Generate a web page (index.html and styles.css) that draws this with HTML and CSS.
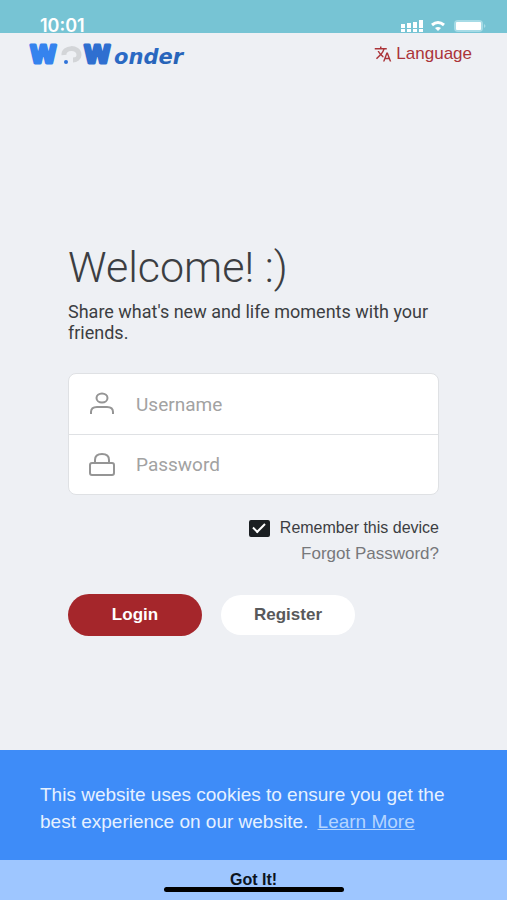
FILE: index.html
```html
<!DOCTYPE html>
<html lang="en">

<head>
  <meta charset="UTF-8" />
  <meta name="viewport" content="width=device-width, initial-scale=1">
  <title>WoWonder</title>
  <link rel="stylesheet" href="styles.css">
</head>

<body>
  <div class="status-bar">
    <span class="time">10:01</span>
    <svg class="status-icons" viewBox="0 0 88 16" aria-hidden="true">
      <g stroke="#fff" stroke-width="4">
        <path d="M4 7v4M10 6v5M16 5v6M22 3v8" />
        <path d="M4 12v3M10 12v3M16 12v3M22 12v3" />
      </g>
      <path d="M33 8q6-5 12 0" fill="none" stroke="#fff" stroke-width="3" />
      <path d="M36 11q3-2 6 0l-3 3z" fill="#fff" />
      <rect x="55" y="3" width="29" height="12" rx="4" fill="#a6dbe6" />
      <rect x="57" y="5" width="25" height="8" rx="1" fill="#fff" />
      <path d="M85 7q3 2 0 4z" fill="#a6dbe6" />
    </svg>
  </div>

  <header class="header">
    <a class="logo" href="#" aria-label="WoWonder">
      <svg viewBox="0 0 164 40">
        <defs>
          <linearGradient id="blue" x1="0" y1="0" x2="1" y2="1">
            <stop offset="0" stop-color="#2f6fd0" />
            <stop offset="1" stop-color="#245fae" />
          </linearGradient>
        </defs>
        <text class="logo-w" x="3" y="29" fill="#3583ee" stroke="#3583ee">W</text>
        <path d="M37 21C36 13 52 12 52 21C52 24 49 26 46 26" fill="none" stroke="#d3d5d8" stroke-width="5" />
        <circle cx="39" cy="28" r="2" fill="#2f73d8" />
        <text class="logo-w" x="57" y="29" fill="#2f6fd0" stroke="#2f6fd0">W</text>
        <text class="logo-name" x="87" y="30" fill="url(#blue)">onder</text>
      </svg>
    </a>
    <a class="language" href="#">
      <svg viewBox="0 0 24 24" aria-hidden="true">
        <path fill="currentColor" d="M12.87 15.07l-2.54-2.51.03-.03A17.52 17.52 0 0 0 14.07 6H17V4h-7V2H8v2H1v1.99h11.17C11.5 7.92 10.44 9.75 9 11.35 8.07 10.32 7.3 9.19 6.69 8h-2c.73 1.63 1.73 3.17 2.98 4.56l-5.09 5.02L4 19l5-5 3.11 3.11.76-2.04zM18.5 10h-2L12 22h2l1.12-3h4.75L21 22h2l-4.5-12zm-2.62 7l1.62-4.33L19.12 17h-3.24z" />
      </svg>
      Language
    </a>
  </header>

  <main class="main">
    <h1>Welcome! :)</h1>
    <p class="intro">Share what's new and life moments with your friends.</p>

    <form>
      <div class="fields">
        <div class="field">
          <label for="username" aria-label="Username">
            <svg viewBox="0 0 28 28">
              <ellipse cx="14" cy="8" rx="5.5" ry="4.5" />
              <path d="M3 24v-2q0-5 6-5h10q6 0 6 5v2" />
            </svg>
          </label>
          <input type="text" id="username" placeholder="Username">
        </div>
        <div class="field">
          <label for="password" aria-label="Password">
            <svg viewBox="0 0 28 28">
              <rect x="2" y="12" width="24" height="12" rx="2" />
              <path d="M7 12V9q0-6 7-6t7 6v3" />
            </svg>
          </label>
          <input type="password" id="password" placeholder="Password">
        </div>
      </div>

      <div class="options">
        <div class="remember">
          <input type="checkbox" id="remember" checked>
          <label for="remember">Remember this device</label>
        </div>
        <a class="forgot" href="#">Forgot Password?</a>
      </div>

      <div class="buttons">
        <button type="submit" class="btn btn-login">Login</button>
        <button type="button" class="btn btn-register">Register</button>
      </div>
    </form>
  </main>

  <div class="cookies">
    <p>This website uses cookies to ensure you get the best experience on our website. <a href="#">Learn More</a></p>
    <button type="button" class="got-it">Got It!</button>
    <div class="home-bar"></div>
  </div>
</body>

</html>
```

FILE: styles.css
```css
* {
  box-sizing: border-box;
}

body {
  margin: 0;
  min-height: 100vh;
  display: flex;
  flex-direction: column;
  background-color: #eef0f4;
  color: #3c3e42;
  font-family: Roboto, sans-serif;
}

.status-bar {
  display: flex;
  justify-content: space-between;
  align-items: flex-end;
  height: 33px;
  padding: 0 20px 0 40px;
  background-color: #77c4d4;
  color: #fff;
}

.time {
  font-family: Inter, sans-serif;
  font-size: 18px;
  font-weight: 600;
  line-height: 14px;
}

.status-icons {
  width: 88px;
  height: 16px;
}

.header {
  display: flex;
  justify-content: space-between;
  align-items: center;
  height: 42px;
  padding: 0 35px 0 27px;
}

.logo svg {
  display: block;
  width: 164px;
  height: 40px;
}

.logo-w {
  font-family: "DejaVu Sans", sans-serif;
  font-size: 24px;
  font-weight: bold;
  stroke-width: 3;
  stroke-linejoin: round;
}

.logo-name {
  font-family: "DejaVu Sans", sans-serif;
  font-size: 21px;
  font-style: italic;
  font-weight: bold;
}

.language {
  display: flex;
  align-items: center;
  gap: 4px;
  color: #ab3439;
  font-family: "Liberation Sans", sans-serif;
  font-size: 17px;
  text-decoration: none;
}

.language svg {
  width: 18px;
  height: 18px;
}

.main {
  flex: 1;
  padding: 168px 68px 48px;
}

h1 {
  margin: 0 0 10px;
  font-size: 43px;
  font-weight: 300;
  line-height: 48px;
}

.intro {
  margin: 0 0 30px;
  font-size: 18px;
  line-height: 21px;
}

.fields {
  overflow: hidden;
  background-color: #fff;
  border: 1px solid #dfe1e4;
  border-radius: 8px;
}

.field {
  display: flex;
  align-items: center;
  height: 60px;
  padding-left: 19px;
}

.field + .field {
  border-top: 1px solid #dfe1e4;
}

.field label,
.field svg {
  display: block;
  width: 28px;
  height: 28px;
}

.field svg {
  fill: none;
  stroke: #959595;
  stroke-width: 2;
}

.field input {
  flex: 1;
  min-width: 0;
  height: 100%;
  padding: 0 20px;
  border: 0;
  outline: 0;
  background: none;
  font-family: inherit;
  font-size: 19px;
}

.field input::placeholder {
  color: #a2a2a2;
}

.options {
  display: flex;
  flex-direction: column;
  align-items: flex-end;
  gap: 4px;
  margin: 22px 0 29px;
  font-family: "Liberation Sans", sans-serif;
  font-size: 16px;
  line-height: 22px;
}

.remember {
  display: flex;
  align-items: center;
  gap: 10px;
}

.remember input {
  appearance: none;
  display: grid;
  place-items: center;
  width: 21px;
  height: 17px;
  margin: 0;
  border: 2px solid #1b1f22;
  border-radius: 2px;
}

.remember input:checked {
  background-color: #1b1f22;
}

.remember input:checked::before {
  content: "";
  width: 10px;
  height: 5px;
  margin-bottom: 3px;
  border: solid #fff;
  border-width: 0 0 2px 2px;
  transform: rotate(-45deg);
}

.forgot {
  color: #77787b;
  font-size: 17px;
  text-decoration: none;
}

.buttons {
  display: flex;
  align-items: center;
  gap: 19px;
}

.btn {
  width: 134px;
  height: 42px;
  border: 0;
  border-radius: 21px;
  font-family: "Liberation Sans", sans-serif;
  font-size: 17px;
  font-weight: bold;
}

.btn-login {
  background-color: #a5262b;
  color: #fff;
}

.btn-register {
  height: 40px;
  background-color: #fff;
  color: #58595b;
}

.cookies {
  position: relative;
  background-color: #3e8cf8;
  color: #e6f1ff;
  font-family: "Liberation Sans", sans-serif;
}

.cookies p {
  margin: 0;
  padding: 31px 40px 25px;
  font-size: 19px;
  line-height: 27px;
}

.cookies a {
  margin-left: 4px;
  color: #b5d5ff;
}

.got-it {
  display: block;
  width: 100%;
  height: 40px;
  padding: 0;
  border: 0;
  background-color: #9ec6ff;
  color: #0b1320;
  font-family: inherit;
  font-size: 16px;
  font-weight: bold;
}

/* home indicator lies over the button */
.home-bar {
  position: absolute;
  bottom: 8px;
  left: 50%;
  width: 180px;
  height: 5px;
  margin-left: -90px;
  border-radius: 3px;
  background-color: #000;
}
```
